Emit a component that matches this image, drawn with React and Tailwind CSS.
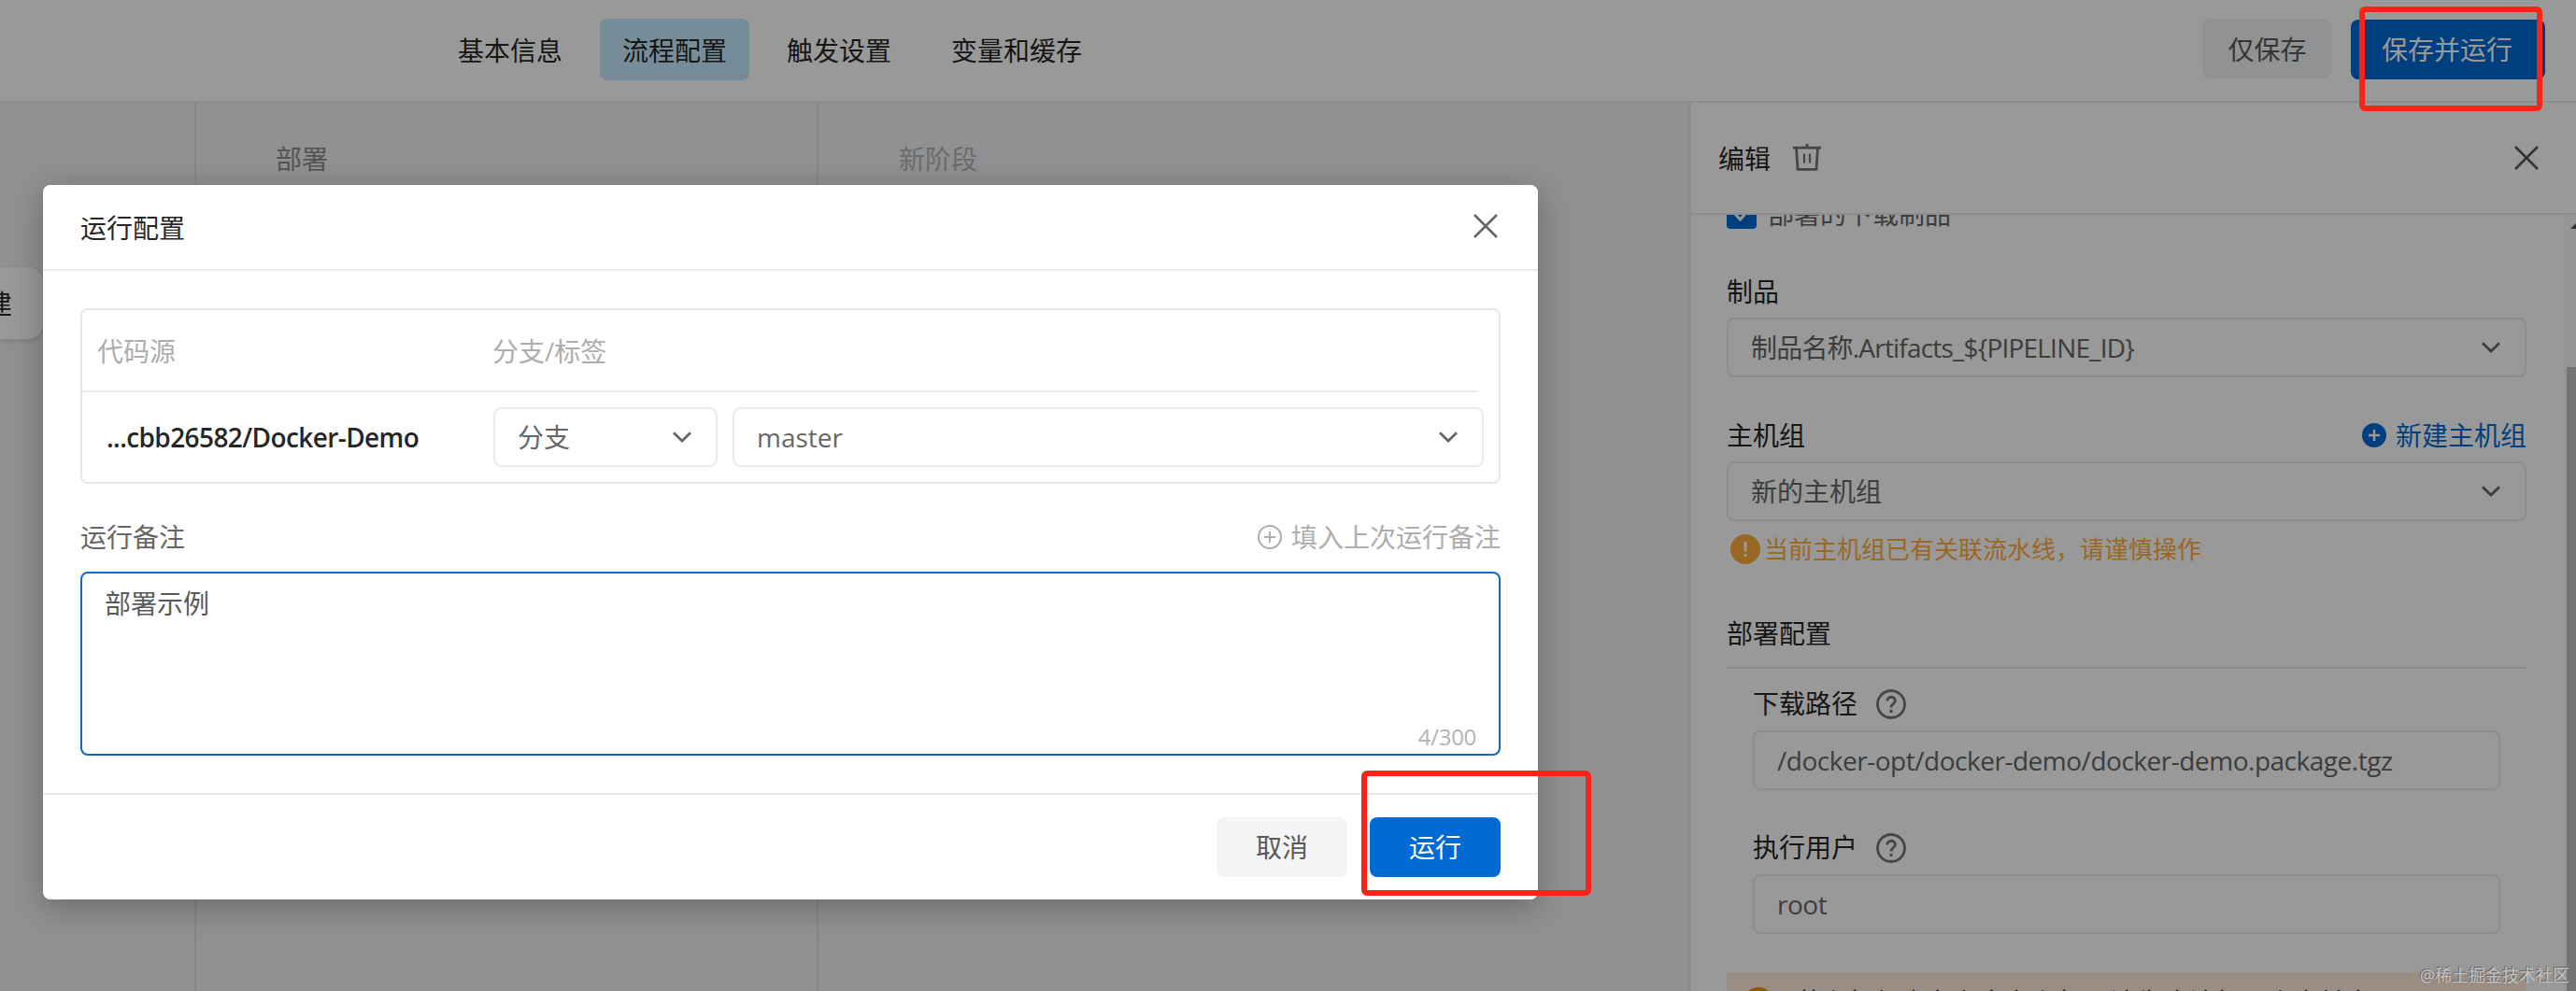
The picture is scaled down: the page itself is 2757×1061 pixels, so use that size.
import clsx from "clsx";

const TABS = [
  { key: "basic", label: "基本信息" },
  { key: "flow", label: "流程配置" },
  { key: "trigger", label: "触发设置" },
  { key: "vars", label: "变量和缓存" },
];

function CloseIcon({ className }) {
  return (
    <svg viewBox="0 0 26 26" className={className} fill="none" stroke="currentColor" strokeWidth="2.6">
      <path d="M1 1L25 25M25 1L1 25" />
    </svg>
  );
}

function ChevronIcon({ className }) {
  return (
    <svg viewBox="0 0 20 12" className={clsx("h-3 w-5 shrink-0", className)} fill="none" stroke="currentColor" strokeWidth="2.8">
      <path d="M1 1.2L10 10L19 1.2" />
    </svg>
  );
}

function TrashIcon() {
  return (
    <svg viewBox="0 0 30 30" className="h-[30px] w-[30px] text-[#757575]" fill="none" stroke="currentColor">
      <path d="M0 4.2H30" strokeWidth="2.8" />
      <path d="M15 0V4" strokeWidth="3" />
      <path d="M3.6 5L5 27.4H25L26.4 5" strokeWidth="2.8" />
      <path d="M12 10.5V20.5M18 10.5V20.5" strokeWidth="2.2" />
    </svg>
  );
}

function HelpIcon() {
  return (
    <svg viewBox="0 0 32 32" className="h-8 w-8 text-[#757575]" fill="none" stroke="currentColor">
      <circle cx="16" cy="16" r="14.5" strokeWidth="2.8" />
      <path d="M11.8 12.6C11.8 6.8 20.4 7 20.4 12.2C20.4 15.4 16 15.6 16 19.4" strokeWidth="2.8" />
      <path d="M16 21.8V25" strokeWidth="3" />
    </svg>
  );
}

function WarnIcon({ className }) {
  return (
    <svg viewBox="0 0 32 32" className={clsx("h-8 w-8 shrink-0", className)}>
      <circle cx="16" cy="16" r="16" fill="currentColor" />
      <path d="M16 8V18.5M16 21V24" stroke="#fff" strokeWidth="3" />
    </svg>
  );
}

function Select({ value, className }) {
  return (
    <div
      className={clsx(
        "flex h-16 items-center justify-between rounded-lg border-2 border-[#ebebeb] pl-6 pr-[26px] text-[#666]",
        className
      )}
    >
      <span>{value}</span>
      <ChevronIcon />
    </div>
  );
}

function Field({ label, value, className }) {
  return (
    <div className={clsx("px-7", className)}>
      <div className="flex h-10 items-center gap-5">
        <span className="-mt-0.5">{label}</span>
        <HelpIcon />
      </div>
      <div className="mt-2 flex h-16 items-center rounded-lg border-2 border-[#ebebeb] pl-6 text-[#666]">
        <span className="tracking-[-0.48px]">{value}</span>
      </div>
    </div>
  );
}

function TopBar() {
  return (
    <header className="flex h-[110px] items-start justify-between border-b-2 border-[#ececec] bg-white pl-[466px] pr-[33px] pt-5">
      <nav className="flex gap-4">
        {TABS.map((tab) => (
          <div
            key={tab.key}
            className={clsx(
              "flex h-[66px] items-center rounded-lg px-6 pt-px",
              tab.key === "flow" && "bg-[#c5ebff]"
            )}
          >
            {tab.label}
          </div>
        ))}
      </nav>

      <div className="flex gap-5">
        <button className="h-16 w-[139px] rounded-lg bg-[#f2f4f6] pt-0.5 text-[#595959]">仅保存</button>
        <button className="mt-px h-16 w-52 rounded-lg bg-[#006ad4] pr-0.5 text-white">保存并运行</button>
      </div>
    </header>
  );
}

function Stages() {
  return (
    <main className="flex flex-1 bg-[#f0f2f4] text-[#8c8c8c]">
      <section className="w-[208px] pt-44">
        <div className="flex h-[77px] w-[46px] items-center justify-end rounded-r-2xl bg-white pr-[33px] text-[#262626] shadow-[0_2px_6px_rgba(0,0,0,0.15)]">
          <span className="shrink-0">建</span>
        </div>
      </section>
      <section className="w-[666px] border-l-2 border-[#dfe1e3] pl-[85px] pt-10">
        部署
      </section>
      <section className="flex-1 border-l-2 border-[#dfe1e3] pl-[86px] pt-10 text-[#b2b4b6]">
        新阶段
      </section>
    </main>
  );
}

function EditPanel() {
  return (
    <aside className="flex w-[951px] flex-col border-l-4 border-[#e9ebee] bg-white">
      <div className="flex h-[120px] shrink-0 items-center border-b-2 border-[#ebebeb] pl-[29px] pr-10">
        <span className="pt-0.5">编辑</span>
        <span className="ml-6">
          <TrashIcon />
        </span>
        <CloseIcon className="ml-auto h-[26px] w-[26px] text-[#555]" />
      </div>

      <div className="flex min-h-0 flex-1 overflow-hidden">
        <div className="w-[894px] shrink-0 pl-[38px]">
          <div className="-mt-[17px] flex h-8 items-center gap-3">
            <div className="flex h-8 w-8 items-center justify-center rounded bg-[#006ad4]">
              <svg viewBox="0 0 20 16" className="h-4 w-5" fill="none" stroke="#fff" strokeWidth="3">
                <path d="M2 7L8.5 14L18 3" />
              </svg>
            </div>
            <span className="text-[#666]">部署的下载制品</span>
          </div>

          <div className="mt-[47px] h-10">制品</div>
          <Select className="mt-2 tracking-[-0.8px]" value="制品名称.Artifacts_${PIPELINE_ID}" />

          <div className="mt-[42px] flex h-10 items-center justify-between">
            <span>主机组</span>
            <span className="flex items-center gap-2.5 text-[#006ad4]">
              <svg viewBox="0 0 26 26" className="h-[26px] w-[26px]">
                <circle cx="13" cy="13" r="13" fill="currentColor" />
                <path d="M13 7V19M7 13H19" stroke="#fff" strokeWidth="2.4" />
              </svg>
              新建主机组
            </span>
          </div>
          <Select className="mt-2" value="新的主机组" />

          <div className="mt-2.5 flex h-10 items-center gap-1 pl-1 text-[26px] text-[#ffad3d]">
            <WarnIcon />
            <span>当前主机组已有关联流水线，请谨慎操作</span>
          </div>

          <div className="mt-[50px] h-10">部署配置</div>
          <div className="mt-4 h-0.5 bg-[#ebebeb]" />

          <Field
            className="mt-[18px]"
            label="下载路径"
            value="/docker-opt/docker-demo/docker-demo.package.tgz"
          />
          <Field className="mt-[42px]" label="执行用户" value="root" />

          <div className="mt-[41px] flex h-24 gap-6 bg-[#ffebdc] pl-[18px] pt-3">
            <WarnIcon className="mt-1 text-[#e89400]" />
            <span>若主机组内存在多台主机，请先确认部署脚本兼容</span>
          </div>
        </div>

        {/* scrollbar, its right half runs off the window */}
        <div className="ml-auto w-[13px] shrink-0 overflow-hidden bg-[#f9f9f9] pl-[3px]">
          <svg viewBox="0 0 12 6" className="mt-[9px] h-1.5 w-3 max-w-none translate-x-1 text-[#505050]">
            <path d="M0 6L6 0L12 6Z" fill="currentColor" />
          </svg>
          <div className="mt-[148px] h-[700px] bg-[#c1c1c1]" />
        </div>
      </div>
    </aside>
  );
}

function RunDialog() {
  return (
    <div className="absolute left-[46px] top-[198px] flex h-[765px] w-[1600px] flex-col rounded-lg bg-white shadow-[0_8px_36px_rgba(0,0,0,0.28)]">
      <div className="flex h-[92px] items-center justify-between border-b-2 border-[#ebebeb] pl-10 pr-[43px]">
        <span className="pt-0.5">运行配置</span>
        <CloseIcon className="-mt-[3px] h-[26px] w-[26px] text-[#666]" />
      </div>

      <div className="flex-1 px-10 pt-10">
        <div className="h-[188px] rounded-lg border-2 border-[#e8e8e8]">
          <div className="mr-[22px] flex h-[88px] items-center border-b-2 border-[#ebebeb] pl-4 pt-0.5 text-[#adadad]">
            <span className="w-[423px]">代码源</span>
            <span>分支/标签</span>
          </div>
          <div className="flex h-24 items-center pl-[26px] pr-4">
            <span className="w-[414px] font-semibold tracking-[-0.6px] text-[#262626]">
              ...cbb26582/Docker-Demo
            </span>
            <Select className="w-60" value="分支" />
            <Select className="ml-4 flex-1" value="master" />
          </div>
        </div>

        <div className="mt-[38px] flex h-10 items-center justify-between text-[#666]">
          <span className="-mt-0.5">运行备注</span>
          <span className="-mt-0.5 flex items-center gap-2.5 text-[#adadad]">
            <svg viewBox="0 0 26 26" className="h-[26px] w-[26px]" fill="none" stroke="currentColor" strokeWidth="2">
              <circle cx="13" cy="13" r="12" />
              <path d="M13 7V19M7 13H19" />
            </svg>
            填入上次运行备注
          </span>
        </div>

        <div className="mt-4 flex h-[197px] flex-col justify-between rounded-lg border-2 border-[#1068bf] px-6 pt-3 text-[#595959]">
          <span>部署示例</span>
          <span className="self-end text-2xl leading-9 tracking-[-0.3px] text-[#b3b3b3]">4/300</span>
        </div>
      </div>

      <div className="flex h-[114px] items-start justify-end gap-6 border-t-2 border-[#ebebeb] pr-10 pt-6">
        <button className="h-16 w-[140px] rounded-lg bg-[#f3f4f6] text-[#595959]">取消</button>
        <button className="h-16 w-[140px] rounded-lg bg-[#006ad4] text-white">运行</button>
      </div>
    </div>
  );
}

function App() {
  return (
    <div className="relative h-[1061px] w-[2757px] overflow-hidden font-['Open_Sans','Noto_Sans_CJK_SC',sans-serif] text-[28px] leading-10 text-[#262626]">
      <div className="flex h-full flex-col">
        <TopBar />
        <div className="flex min-h-0 flex-1">
          <Stages />
          <EditPanel />
        </div>
      </div>

      <div className="absolute inset-0 bg-black/40" />
      <RunDialog />

      {/* highlight frames */}
      <div className="absolute left-[2525px] top-[7px] h-28 w-[196px] rounded-md border-6 border-[#fb2315]" />
      <div className="absolute left-[1457px] top-[825px] h-[134px] w-[246px] rounded-md border-6 border-[#fb2315]" />

      <div className="absolute bottom-0 right-[7px] whitespace-nowrap text-[18px] leading-[34px] text-[#c4c4c4] [text-shadow:-1px_-1px_0_#666]">
        @稀土掘金技术社区
      </div>
    </div>
  );
}

export default App;
